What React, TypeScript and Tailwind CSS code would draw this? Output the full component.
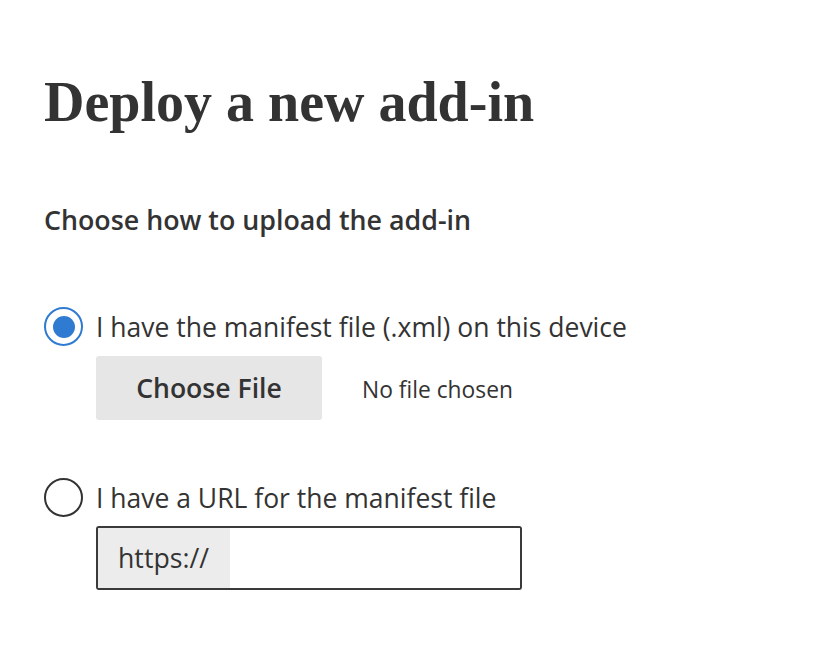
import React, { useState } from 'react';

const body = { fontFamily: '"Open Sans", "Noto Sans", sans-serif' };

const Radio = ({ checked, onClick }: { checked: boolean; onClick: () => void }) => (
  <button
    type="button"
    onClick={onClick}
    className={`flex h-[39px] w-[39px] shrink-0 items-center justify-center rounded-full border-2 bg-white ${
      checked ? 'border-[#2f7bd2]' : 'border-[#333333]'
    }`}
  >
    {checked && <span className="h-[22px] w-[22px] rounded-full bg-[#2f7bd2]" />}
  </button>
);

const App = () => {
  const [mode, setMode] = useState<'file' | 'url'>('file');

  return (
    <div className="min-h-screen bg-white pl-[44px] pt-[74px] text-[#333333]" style={body}>
      <h1
        className="h-[56px] text-[56px] font-bold leading-none"
        style={{ fontFamily: '"Liberation Serif", "Times New Roman", serif' }}
      >
        Deploy a new add-in
      </h1>

      <p className="mt-[74px] h-[32px] text-[26.8px] font-semibold leading-[32px]">
        Choose how to upload the add-in
      </p>

      <div className="mt-[71px] flex h-[39px] items-center gap-[13px]">
        <Radio checked={mode === 'file'} onClick={() => setMode('file')} />
        <span className="text-[26.5px] leading-[32px]">I have the manifest file (.xml) on this device</span>
      </div>

      <div className="ml-[52px] mt-[10px] flex items-center gap-[40px]">
        <button
          type="button"
          className="h-[64px] w-[226px] rounded-[3px] bg-[#e6e6e6] text-[26.6px] font-semibold leading-[32px]"
        >
          Choose File
        </button>
        <span className="pt-[3px] text-[22.8px] leading-[32px]">No file chosen</span>
      </div>

      <div className="mt-[58px] flex h-[39px] items-center gap-[13px]">
        <Radio checked={mode === 'url'} onClick={() => setMode('url')} />
        <span className="text-[26.5px] leading-[32px]">I have a URL for the manifest file</span>
      </div>

      <div className="ml-[52px] mt-[9px] flex h-[64px] w-[426px] overflow-hidden rounded-[3px] border-2 border-[#3a3a3a]">
        <span className="flex w-[132px] items-center bg-[#ececec] pl-[20px] text-[26.7px] leading-[32px]">https://</span>
        <input className="min-w-0 flex-1 bg-white px-3 text-[26px] outline-none" />
      </div>
    </div>
  );
};

export default App;
